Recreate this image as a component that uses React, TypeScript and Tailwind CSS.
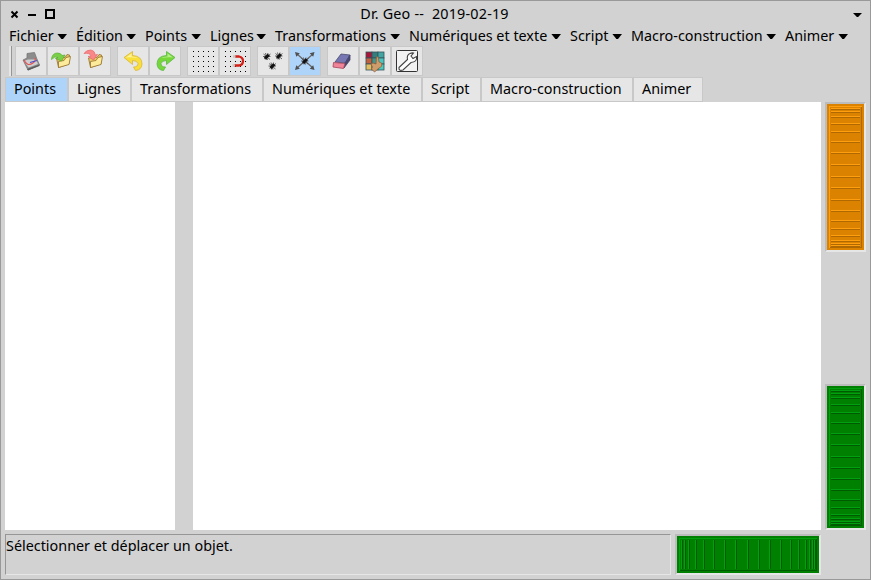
import React from 'react';

const menus = [
  { label: 'Fichier', box: 'w-[67px]' },
  { label: 'Édition', box: 'w-[69px]' },
  { label: 'Points', box: 'w-[65px]' },
  { label: 'Lignes', box: 'w-[65px]' },
  { label: 'Transformations', box: 'w-[134px]' },
  { label: 'Numériques et texte', box: 'w-[161px]' },
  { label: 'Script', box: 'w-[61px]' },
  { label: 'Macro-construction', box: 'w-[154px]' },
  { label: 'Animer', box: 'w-[72px]' },
];

const tabs = [
  { label: 'Points', box: 'w-[63px]' },
  { label: 'Lignes', box: 'w-[63px]' },
  { label: 'Transformations', box: 'w-[132px]' },
  { label: 'Numériques et texte', box: 'w-[159px]' },
  { label: 'Script', box: 'w-[59px]' },
  { label: 'Macro-construction', box: 'w-[152px]' },
  { label: 'Animer', box: 'w-[70px]' },
];

function Arrow({ className = '' }: { className?: string }) {
  return (
    <svg width="10" height="5" viewBox="0 0 10 5" className={`shrink-0 ${className}`}>
      <path d="M0.4 0H10L6 5H4.4Z" fill="#000" />
    </svg>
  );
}

function Icon({ children }: { children: React.ReactNode }) {
  return (
    <svg width="30" height="28" viewBox="0 0 30 28">
      {children}
    </svg>
  );
}

function ToolButton({ active = false, children }: { active?: boolean; children: React.ReactNode }) {
  return (
    <div className={`h-[30px] w-8 border border-[#c8c8c8] ${active ? 'bg-[#afd4fa]' : 'bg-[#e6e6e6]'}`}>
      <Icon>{children}</Icon>
    </div>
  );
}

function Folder() {
  return (
    <g stroke="#94702c" strokeWidth="0.8" strokeLinejoin="round">
      <path d="M8.5 11L15 10L17 10.5L19 7.5L21.5 8L21 17L10.5 20.5Z" fill="#e8c765" />
      <path d="M10.5 20.5L10.5 14.5L16 13.5L18 10.5L22.5 9.5L21 17.5Z" fill="#fdeb9c" />
    </g>
  );
}

function Dots() {
  const at = [0, 1, 2, 3, 4];
  return (
    <g fill="#000" shapeRendering="crispEdges">
      {at.map((r) => at.map((c) => <rect key={`${r}-${c}`} x={5 + c * 5} y={4 + r * 5} width="1" height="1" />))}
    </g>
  );
}

function Ant({ x, y }: { x: number; y: number }) {
  return (
    <g transform={`translate(${x} ${y})`} stroke="#444" strokeWidth="0.8">
      <path d="M-3.5 -2.5L3 3M-3 2.5L3.5 -2.5M-1.5 -3.5L0.5 3.5M-4 0H3.5M1 -3.5L-1 3.5" />
      <path d="M-2 2L1.8 -1.8" stroke="#111" strokeWidth="3" />
    </g>
  );
}

const orangeMarks = [4, 7, 12, 19, 27, 37, 48, 60, 72, 83, 95, 106, 116, 124, 131, 136, 139, 141];
const greenMarks = [4, 7, 11, 18, 26, 36, 47, 58, 70, 81, 92, 103, 113, 121, 128, 132, 135, 137];

type WheelProps = {
  width: number;
  height: number;
  marks: number[];
  base: string;
  light: string;
  dark: string;
  horizontal?: boolean;
};

function Wheel({ width, height, marks, base, light, dark, horizontal = false }: WheelProps) {
  return (
    <div className="w-fit border-2 border-t-[#bcbcbc] border-r-[#e6e6e6] border-b-[#e6e6e6] border-l-[#bcbcbc]">
      <svg width={width} height={height} className="block" shapeRendering="crispEdges">
        <rect width={width} height={height} fill={base} />
        <rect x="2" y="2" width={width - 4} height="1" fill={light} />
        <rect x="2" y="2" width="1" height={height - 4} fill={light} />
        <rect x={width - 3} y="3" width="1" height={height - 5} fill={dark} />
        <rect x="3" y={height - 3} width={width - 5} height="1" fill={dark} />
        {marks.map((m) =>
          horizontal ? (
            <g key={m}>
              <rect x={m} y="4" width="1" height={height - 8} fill={light} />
              <rect x={m + 1} y="4" width="1" height={height - 8} fill={dark} />
            </g>
          ) : (
            <g key={m}>
              <rect x="4" y={m} width={width - 8} height="1" fill={light} />
              <rect x="4" y={m + 1} width={width - 8} height="1" fill={dark} />
            </g>
          ),
        )}
      </svg>
    </div>
  );
}

function TitleBar() {
  return (
    <header className="flex h-[25px] items-center pl-[9px] pr-[8px]">
      <svg width="48" height="12" viewBox="0 0 48 12" className="shrink-0">
        <path d="M1.5 3.5L7.5 9.5M7.5 3.5L1.5 9.5" stroke="#000" strokeWidth="2" />
        <rect x="18" y="6" width="8" height="2" fill="#000" />
        <rect x="36" y="2" width="8" height="8" fill="none" stroke="#000" strokeWidth="2" />
      </svg>
      <div className="grow whitespace-pre pr-[42px] text-center tracking-[0.19px]">Dr. Geo --  2019-02-19</div>
      <svg width="9" height="4" viewBox="0 0 9 4" className="mt-[2px]">
        <path d="M0 0H9L5.1 4H3.9Z" fill="#000" />
      </svg>
    </header>
  );
}

function Toolbar() {
  return (
    <div className="flex h-[30px] gap-[6px] pl-2">
      <div className="flex">
        <div className="mr-[3px] h-[30px] w-[3px] border-r border-[#969696] bg-[#e6e6e6]" />
        <ToolButton>
          <path d="M7 13L11 11L11 6.5L18.5 5.5L20.5 11L23.5 18L12 23Z" fill="#8c8c8c" stroke="#777" strokeWidth="0.8" />
          <path d="M8 14L12 12.5H20L22 17L12.5 20.5Z" fill="#cfcfcf" />
          <path d="M11 22L23.5 17.5V19L12 23.5Z" fill="#5c5c5c" />
          <path d="M8 13Q11 20 17 16Q20 14 19 11" fill="none" stroke="#e45050" strokeWidth="1.1" />
          <path d="M14 15.5L21 13.5" stroke="#4a4ac8" strokeWidth="1.2" />
        </ToolButton>
        <ToolButton>
          <Folder />
          <path d="M3.5 12.5Q4 6 9.5 6Q13 6 14 8.5L17 8L13.5 14L7.5 11.5L10 10.5Q7 8.5 3.5 12.5Z" fill="#79cf46" stroke="#56ac30" strokeWidth="0.7" />
        </ToolButton>
        <ToolButton>
          <Folder />
          <path d="M4 6.5Q6 3 10.5 3Q15 3.5 15 8L17.5 7.5L13.5 13L8 9.5L11 9Q10 5.5 4 6.5Z" fill="#f98788" stroke="#ea6468" strokeWidth="0.7" />
        </ToolButton>
      </div>
      <div className="flex">
        <ToolButton>
          <path d="M6 10.5L14.5 4.5V8.5Q24 9 24 17Q23.5 23 17.5 23.5L15.5 20Q20 20 20 16.5Q19 13.5 14.5 13.5V17.5Z" fill="#f8df3a" stroke="#d9b43a" strokeWidth="0.8" />
          <path d="M8 10.5L13.5 6.5V9.5Q18 9.5 20 11Q14 10 8 10.5Z" fill="#fdf3a0" />
        </ToolButton>
        <ToolButton>
          <path d="M25 10.5L16.5 4.5V8.5Q7 9 7 17Q7.5 23 13.5 23.5L15.5 20Q11 20 11 16.5Q12 13.5 16.5 13.5V17.5Z" fill="#76d739" stroke="#5bb648" strokeWidth="0.8" />
          <path d="M23 10.5L17.5 6.5V9.5Q13 9.5 11 11Q17 10 23 10.5Z" fill="#b5ee88" />
        </ToolButton>
      </div>
      <div className="flex">
        <ToolButton>
          <Dots />
        </ToolButton>
        <ToolButton>
          <Dots />
          <path d="M15 9.5H19Q23 10.5 23 14Q23 18 19 18.5H14" fill="none" stroke="#d32119" strokeWidth="2.3" />
          <path d="M13 9.5H15.5M12.5 18.5H15" stroke="#c9c4c0" strokeWidth="2.3" />
        </ToolButton>
      </div>
      <div className="flex">
        <ToolButton>
          <Ant x={9} y={9.5} />
          <Ant x={21} y={9} />
          <Ant x={14.5} y={19} />
        </ToolButton>
        <ToolButton active>
          <path d="M7 7L23 21M23 7L7 21" stroke="#666" strokeWidth="1.2" />
          <path d="M5 5L9.8 6.3L6.3 9.8ZM24.5 5L23.2 9.8L19.7 6.3ZM5 23L6.3 18.2L9.8 21.7ZM24.5 23L19.7 21.7L23.2 18.2Z" fill="#505050" />
          <Ant x={15} y={14} />
        </ToolButton>
      </div>
      <div className="flex">
        <ToolButton>
          <path d="M7 15L13 7L22 8L17 16Z" fill="#7676b2" stroke="#4b4b70" strokeWidth="0.8" />
          <path d="M17 16L22 8V13L16 21Z" fill="#47476f" stroke="#45456f" strokeWidth="0.8" />
          <path d="M5.5 15.5L17 16.5L15.5 21.5L5 20Z" fill="#f08599" stroke="#a44359" strokeWidth="0.8" />
        </ToolButton>
        <ToolButton>
          <g stroke="#35545a" strokeWidth="0.8">
            <rect x="6" y="5" width="6" height="6" fill="#aa1539" />
            <rect x="12" y="5" width="6" height="6" fill="#347e7d" />
            <rect x="18" y="5" width="6" height="6" fill="#43a5a2" />
            <rect x="6" y="11" width="6" height="6" fill="#c2603f" />
            <rect x="12" y="11" width="6" height="6" fill="#4d9384" />
            <rect x="18" y="11" width="6" height="6" fill="#49c5bd" />
            <rect x="6" y="17" width="6" height="6" fill="#e2bd62" />
            <rect x="12" y="17" width="6" height="6" fill="#77bc8e" />
            <rect x="18" y="17" width="6" height="6" fill="#4ac9bc" />
          </g>
          <path d="M16.5 10Q18 9 18.5 11L19 15L21.5 16Q22.5 20 19 21L14.5 25L11.5 22L12.5 20L11 17L13 16L16 17Z" fill="#cf9c6c" stroke="#8c6340" strokeWidth="0.8" />
        </ToolButton>
        <ToolButton>
          <rect x="4.5" y="3.5" width="21" height="21" rx="1" fill="#f3f3f3" stroke="#333" />
          <path d="M7 20.5L15.5 12.5Q14.5 8 18 6.5Q20 5.5 21.5 6L19 9L21 11.5L24.5 9.5Q25.5 15 19 15.5L11 23Q6.5 24.5 7 20.5Z" fill="#fff" stroke="#444" strokeWidth="1.1" />
        </ToolButton>
      </div>
    </div>
  );
}

export default function App() {
  return (
    <div className="flex h-[580px] w-[871px] flex-col overflow-hidden border border-[#999999] bg-[#d2d2d2] font-['Noto_Sans','Open_Sans',sans-serif] text-[14.37px] leading-[20px] text-black">
      <TitleBar />
      <nav className="flex h-5 pl-2">
        {menus.map((m) => (
          <div key={m.label} className={`flex shrink-0 items-center justify-between whitespace-nowrap pr-[8.6px] ${m.box}`}>
            <span>{m.label}</span>
            <Arrow className="mt-px" />
          </div>
        ))}
      </nav>
      <Toolbar />
      <div className="mt-px flex h-[25px] pl-1">
        {tabs.map((t, i) => (
          <div
            key={t.label}
            className={`shrink-0 whitespace-nowrap border border-[#c8c8c8] pl-2 leading-[22px] ${t.box} ${i === 0 ? 'bg-[#afd4fa]' : 'bg-[#e6e6e6]'}`}
          >
            {t.label}
          </div>
        ))}
      </div>
      <main className="flex h-[428px] pl-1">
        <div className="w-[170px] bg-white" />
        <div className="ml-[18px] w-[628px] bg-white" />
        <div className="ml-1 flex flex-col justify-between">
          <Wheel width={37} height={146} marks={orangeMarks} base="#db8300" light="#ff9f10" dark="#b06800" />
          <Wheel width={37} height={142} marks={greenMarks} base="#008000" light="#00a010" dark="#005a00" />
        </div>
      </main>
      <footer className="mt-1 flex h-[41px] gap-1 pl-1">
        <div className="w-[666px] border border-t-[#969696] border-r-[#e6e6e6] border-b-[#e6e6e6] border-l-[#969696] pt-px">Sélectionner et déplacer un objet.</div>
        <Wheel width={142} height={37} marks={greenMarks} base="#008000" light="#00a010" dark="#005a00" horizontal />
      </footer>
    </div>
  );
}
